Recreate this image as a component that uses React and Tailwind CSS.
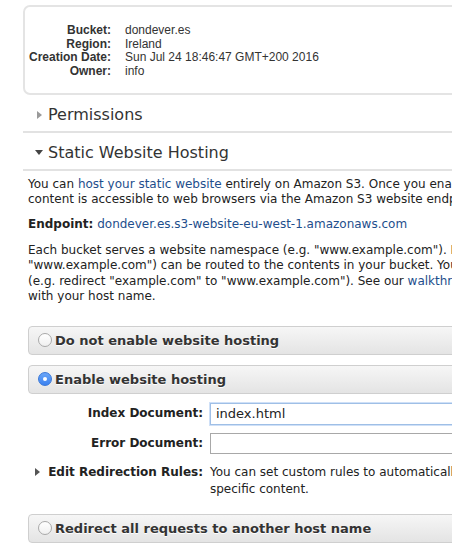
import React from 'react';

const verdana = { fontFamily: '"DejaVu Sans", Verdana, sans-serif' };

function Radio ({ checked }) {
    if (checked) {
        return (
            <span className="w-[14px] h-[14px] rounded-full bg-gradient-to-b from-[#6aa6f8] to-[#3c82f0] border border-[#3a78d8] flex items-center justify-center shrink-0">
                <span className="w-[4px] h-[4px] rounded-full bg-white"></span>
            </span>
        );
    }
    return (
        <span className="w-[14px] h-[14px] rounded-full bg-gradient-to-b from-white to-[#f0f0f0] border border-[#a9a9a9] shrink-0"></span>
    );
}

function OptionBox ({ checked, label }) {
    return (
        <div className="h-[29px] w-[600px] rounded-[4px] border border-[#cfcfcf] bg-gradient-to-b from-[#f6f6f6] to-[#e4e4e4] flex items-center pl-[9px] gap-[3px]">
            <Radio checked={checked} />
            <span className="text-[13px] font-bold text-[#333] whitespace-nowrap [text-shadow:0_1px_0_#fff]">{label}</span>
        </div>
    );
}

function App () {
    return (
        <div className="w-[452px] h-[559px] overflow-hidden bg-white" style={verdana}>
            <div className="pl-[23px] pt-[5px] w-[700px]">
                {/* bucket details */}
                <div className="h-[90px] rounded-[7px] border-2 border-[#e4e4e4] pt-[17px] text-[12px] leading-[13.6px] text-[#333]" style={{ fontFamily: '"Liberation Sans", Arial, sans-serif' }}>
                    <div className="grid grid-cols-[86px_1fr] gap-x-[14px]">
                        <span className="text-right font-bold">Bucket:</span>
                        <span>dondever.es</span>
                        <span className="text-right font-bold">Region:</span>
                        <span>Ireland</span>
                        <span className="text-right font-bold">Creation Date:</span>
                        <span>Sun Jul 24 18:46:47 GMT+200 2016</span>
                        <span className="text-right font-bold">Owner:</span>
                        <span>info</span>
                    </div>
                </div>

                {/* Permissions */}
                <div className="h-[38px] pt-[3px] border-b-2 border-[#e2e2e2] flex items-center text-[16px] text-[#333]">
                    <span className="w-[25px] flex justify-end pr-[6px]">
                        <svg width="5" height="8" viewBox="0 0 5 8"><path d="M0 0 L5 4 L0 8 Z" fill="#9a9a9a" /></svg>
                    </span>
                    <span>Permissions</span>
                </div>

                {/* Static Website Hosting */}
                <div className="h-[38px] pt-[3px] border-b-2 border-[#e2e2e2] flex items-center text-[16px] text-[#333]">
                    <span className="w-[25px] flex justify-end pr-[5px]">
                        <svg width="8" height="5" viewBox="0 0 8 5"><path d="M0 0 L8 0 L4 5 Z" fill="#444" /></svg>
                    </span>
                    <span>Static Website Hosting</span>
                </div>

                <div className="pl-[5px] text-[12px] leading-[15px] text-[#222] whitespace-nowrap">
                    <p className="mt-[6px]">
                        You can <span className="text-[#1e4e8c]">host your static website</span> entirely on Amazon S3. Once you enable website hosting, all your<br />
                        content is accessible to web browsers via the Amazon S3 website endpoint for your bucket.
                    </p>
                    <p className="mt-[10px]">
                        <span className="font-bold">Endpoint:</span> <span className="text-[#1e4e8c]">dondever.es.s3-website-eu-west-1.amazonaws.com</span>
                    </p>
                    <p className="mt-[11px] leading-[15.4px]">
                        Each bucket serves a website namespace (e.g. "www.example.com"). Requests for your host name (e.g. "example.com" or<br />
                        "www.example.com") can be routed to the contents in your bucket. You can also redirect requests to another host name<br />
                        (e.g. redirect "example.com" to "www.example.com"). See our <span className="text-[#1e4e8c]">walkthrough</span> for how to set up an Amazon S3 static website<br />
                        with your host name.
                    </p>

                    <div className="mt-[21px] flex flex-col gap-[10px]">
                        <OptionBox label="Do not enable website hosting" />
                        <OptionBox checked label="Enable website hosting" />
                    </div>

                    {/* documents */}
                    <div className="mt-[9px] flex flex-col gap-[8px]">
                        <div className="flex items-center">
                            <label className="w-[182px] text-right font-bold text-[#222] pr-[7px]">Index Document:</label>
                            <input type="text" defaultValue="index.html" className="w-[400px] h-[22px] border border-[#9fbfe6] outline-none px-[5px] text-[13px] text-[#222] shadow-[0_0_0_1px_#cfe0f7]" style={verdana} />
                        </div>
                        <div className="flex items-center">
                            <label className="w-[182px] text-right font-bold text-[#222] pr-[7px]">Error Document:</label>
                            <input type="text" className="w-[400px] h-[21px] border border-[#a8a8a8] outline-none px-[5px] text-[13px]" style={verdana} />
                        </div>
                    </div>

                    <div className="mt-[10px] flex items-start leading-[17px]">
                        <span className="w-[182px] flex items-center pr-[7px]">
                            <span className="w-[16px] flex justify-end pr-[4px]">
                                <svg width="5" height="8" viewBox="0 0 5 8"><path d="M0 0 L5 4 L0 8 Z" fill="#555" /></svg>
                            </span>
                            <span className="flex-1 text-right font-bold text-[#222]">Edit Redirection Rules:</span>
                        </span>
                        <span>
                            You can set custom rules to automatically redirect web page requests for<br />
                            specific content.
                        </span>
                    </div>

                    <div className="mt-[16px]">
                        <OptionBox label="Redirect all requests to another host name" />
                    </div>
                </div>
            </div>
        </div>
    );
}

export default App;
